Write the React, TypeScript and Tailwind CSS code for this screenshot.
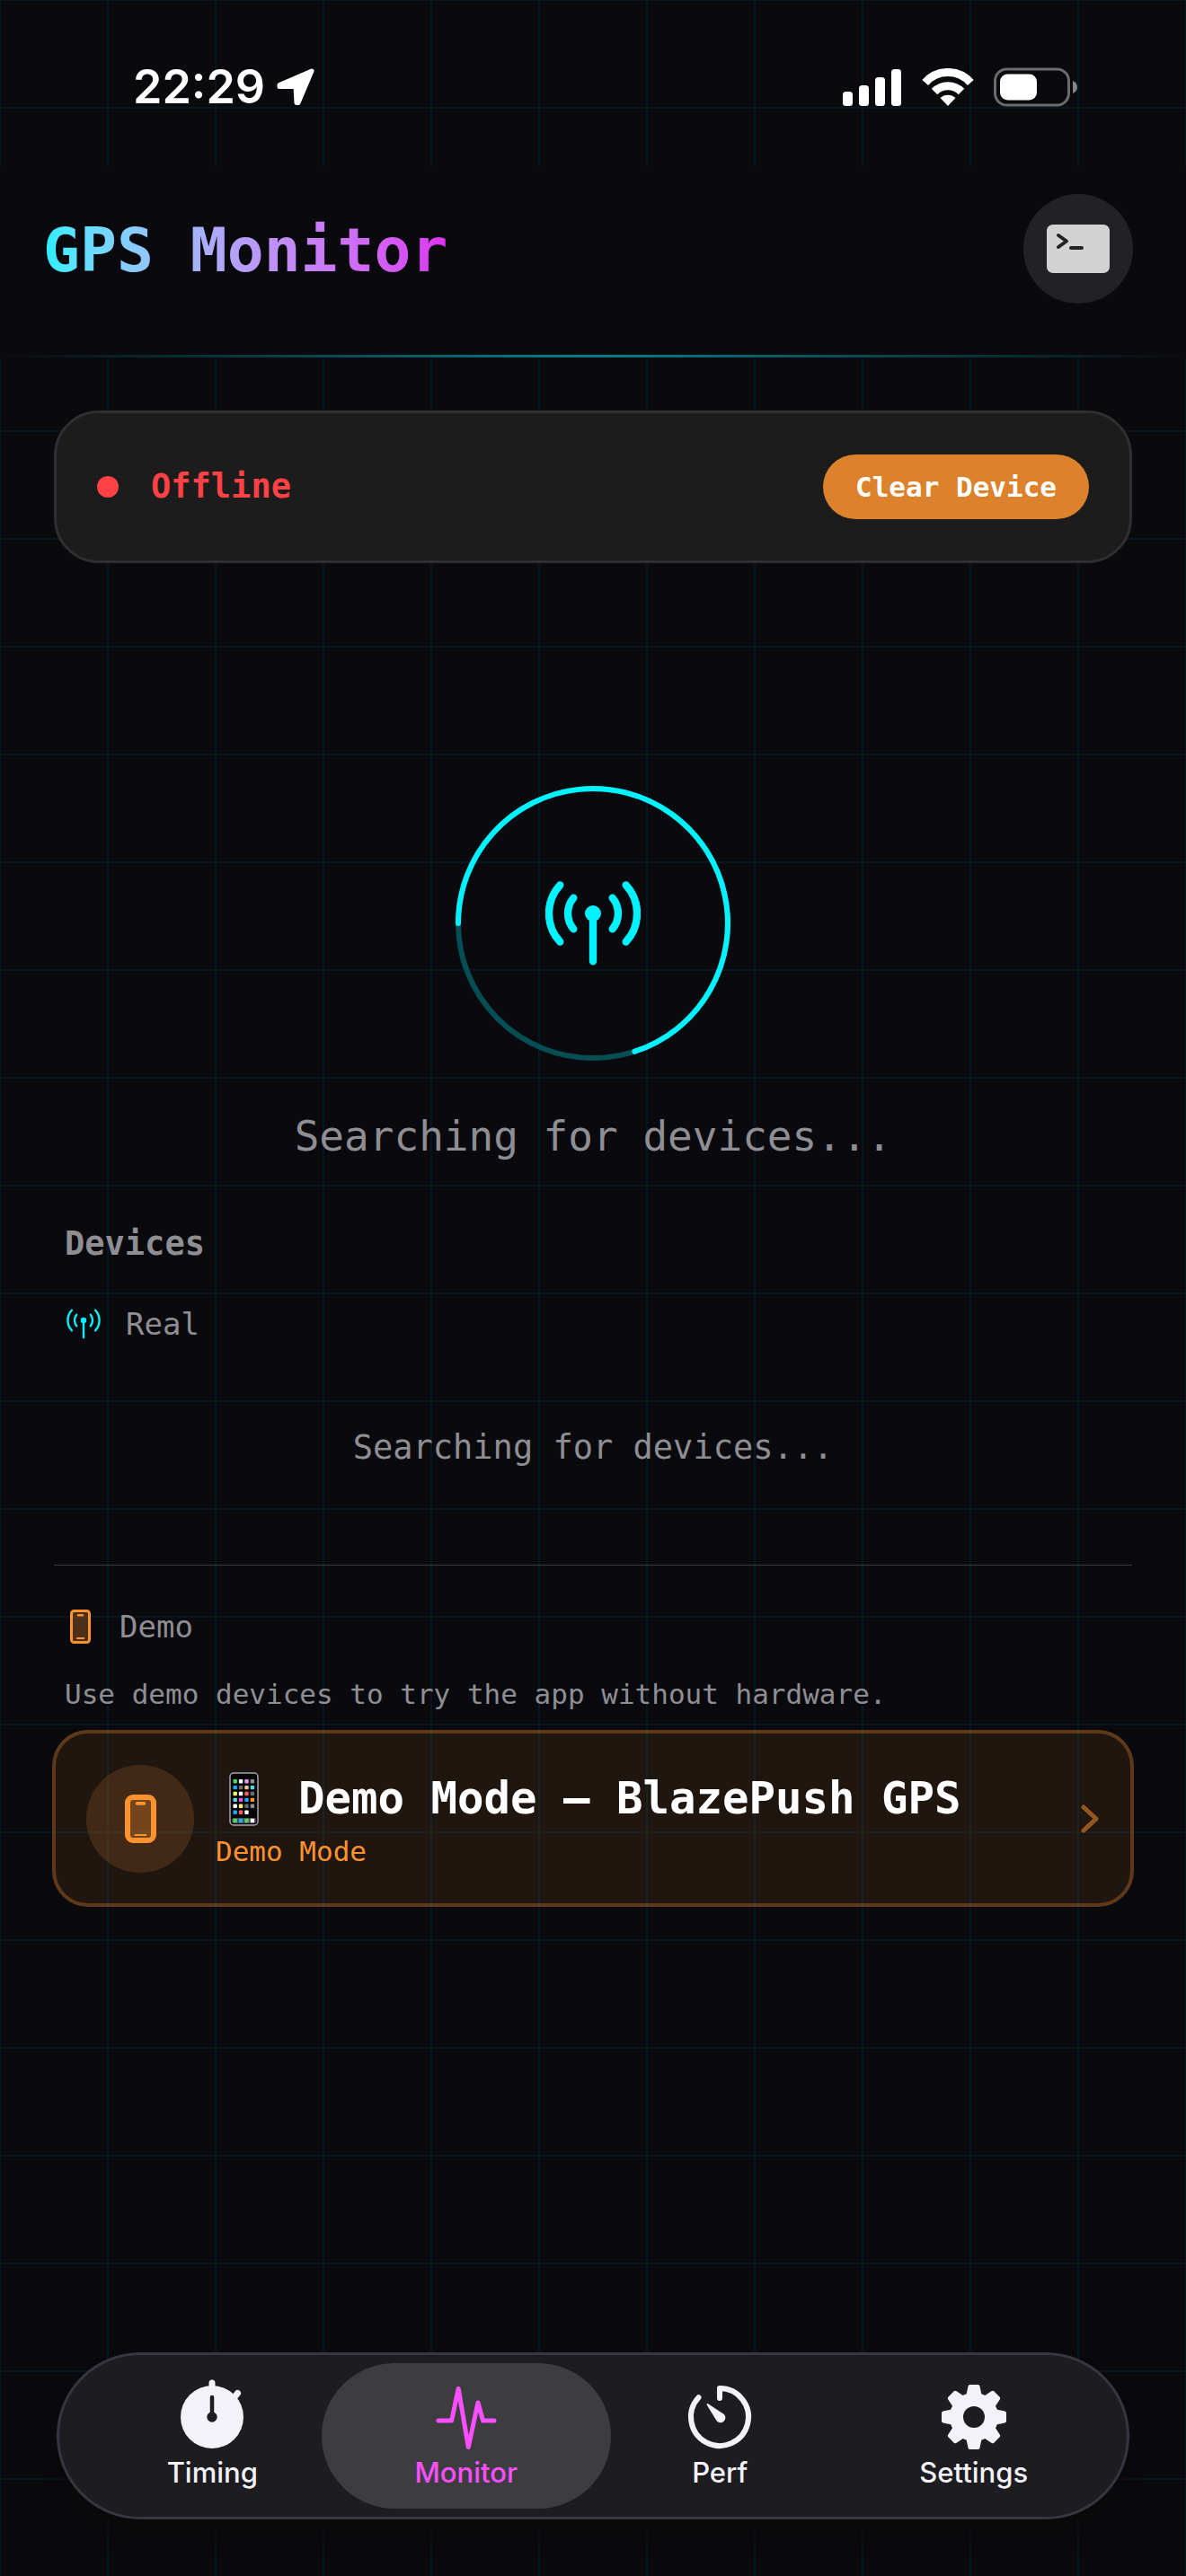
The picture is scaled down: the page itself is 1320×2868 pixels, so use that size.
import React from 'react';
import clsx from 'clsx';

interface IconProps {
  className?: string;
}

interface AntennaProps extends IconProps {
  stroke: number;
}

interface PhoneProps extends IconProps {
  width: number;
  height: number;
  stroke: number;
}

interface TabItem {
  id: string;
  name: string;
  icon: React.ReactNode;
}

const APP_COLORS = ['#4cd964', '#ffffff', '#e59bf5', '#8e8e93', '#1badf8', '#6b6b70', '#e8c39e', '#4fd8e8', '#fff06a', '#ffffff', '#ff5b57', '#6b6b70', '#5be0e0', '#ef4fef', '#1badf8', '#ff9500', '#ffffff', '#fff06a', '#6b6b70', '#8e8e93', '#1badf8', '#ff5b57', '#ffffff'];
const DOCK_COLORS = ['#4cd964', '#1badf8', '#4cd964', '#ffffff'];
const GEAR_TEETH = [0, 45, 90, 135, 180, 225, 270, 315];

const AntennaIcon = ({ className, stroke }: AntennaProps) => (
  <svg viewBox="441 396 318 280" className={className} fill="none" stroke="#00f3ff" strokeWidth={stroke} strokeLinecap="round" aria-hidden="true">
    <path d="M490 408A140 140 0 0 0 490 598M535 451A81 81 0 0 0 535 555M710 408A140 140 0 0 1 710 598M665 451A81 81 0 0 1 665 555M600 503V663" />
    <circle cx="600" cy="503" r="27" fill="#00f3ff" stroke="none" />
  </svg>
);

const PhoneIcon = ({ className, width, height, stroke }: PhoneProps) => (
  <svg width={width} height={height} viewBox={`0 0 ${width} ${height}`} className={className} fill="none" aria-hidden="true">
    <rect x={stroke / 2} y={stroke / 2} width={width - stroke} height={height - stroke} rx={stroke} fill="#ff9230" fillOpacity="0.27" stroke="#ff9230" strokeWidth={stroke} />
    <rect x={width / 2 - width * 0.16} y={stroke + 2} width={width * 0.32} height={width * 0.11} rx="1.5" fill="#ff9230" />
    <rect x={width / 2 - width * 0.2} y={height - stroke - 4} width={width * 0.4} height="2" rx="1" fill="#ff9230" />
  </svg>
);

const PhoneEmoji = () => (
  <svg width="60" height="60" viewBox="0 0 60 60" className="shrink-0" role="img" aria-label="Phone">
    <rect x="16" y="1" width="31" height="58" rx="4" fill="#050507" stroke="#a8a3aa" strokeWidth="1.5" />
    <rect x="18" y="51" width="27" height="6" rx="1.5" fill="#4a4a4f" />
    {APP_COLORS.map((color, i) => (
      <rect key={i} x={19.5 + (i % 4) * 6.4} y={8 + Math.floor(i / 4) * 6.9} width="4.4" height="4.4" rx="1" fill={color} />
    ))}
    {DOCK_COLORS.map((color, i) => (
      <rect key={i} x={19.5 + i * 6.4} y="51.8" width="4.4" height="4.4" rx="1" fill={color} />
    ))}
  </svg>
);

const TimingIcon = () => (
  <svg width="84" height="84" viewBox="0 0 84 84" strokeLinecap="round" aria-hidden="true">
    <circle cx="42" cy="42" r="35" fill="#f2f2f8" />
    <path d="M42 4V12M70.500 15.500L66 21" stroke="#f2f2f8" strokeWidth="7" />
    <path d="M42 42V20" stroke="#1d1d21" strokeWidth="4.500" />
    <circle cx="42" cy="42" r="5.700" fill="#1d1d21" />
  </svg>
);

const MonitorIcon = () => (
  <svg width="84" height="84" viewBox="0 0 84 84" fill="none" stroke="#fa4fff" strokeWidth="5" strokeLinecap="round" strokeLinejoin="round" aria-hidden="true">
    <path d="M11 46H25.600L33.200 10.500L44.300 75.500L55 26L60.500 46H73" />
  </svg>
);

const PerfIcon = () => (
  <svg width="84" height="84" viewBox="0 0 84 84" fill="none" stroke="#f2f2f8" strokeLinecap="round" strokeLinejoin="round" aria-hidden="true">
    <path d="M42 21V10A32 32 0 1 1 18.500 20.300" strokeWidth="6" />
    <path d="M28.500 28L39 45A4.500 4.500 0 1 0 46 39.500Z" fill="#f2f2f8" strokeWidth="2" />
  </svg>
);

const SettingsIcon = () => (
  <svg width="84" height="84" viewBox="0 0 84 84" fill="#f2f2f8" stroke="#f2f2f8" strokeLinejoin="round" aria-hidden="true">
    <circle cx="42" cy="42" r="19.500" fill="none" strokeWidth="15" />
    {GEAR_TEETH.map((angle) => (
      <path key={angle} d="M37.500 8H46.500L49 20H35Z" strokeWidth="4" transform={`rotate(${angle} 42 42)`} />
    ))}
  </svg>
);

const TABS: TabItem[] = [
  { id: 'timing', name: 'Timing', icon: <TimingIcon /> },
  { id: 'monitor', name: 'Monitor', icon: <MonitorIcon /> },
  { id: 'perf', name: 'Perf', icon: <PerfIcon /> },
  { id: 'settings', name: 'Settings', icon: <SettingsIcon /> },
];

const StatusBar = () => (
  <div className="flex h-[186px] items-start justify-between pt-[67px] pr-[120px] pl-[148px] text-white">
    <div className="flex h-[60px] items-center gap-3">
      <span className="font-['Inter',sans-serif] text-[52px] leading-[60px] font-semibold">22:29</span>
      <svg width="44" height="44" viewBox="0 0 44 44" fill="currentColor" stroke="currentColor" strokeWidth="5" strokeLinejoin="round" aria-hidden="true">
        <path d="M40 4L4 19.500V21.500H22L23 39.500H25Z" />
      </svg>
    </div>
    <div className="flex h-[60px] items-center">
      <svg width="66" height="42" viewBox="0 0 66 42" fill="currentColor" aria-hidden="true">
        <rect x="0" y="26" width="11" height="16" rx="3.500" />
        <rect x="18" y="19" width="11" height="23" rx="3.500" />
        <rect x="36" y="10" width="11" height="32" rx="3.500" />
        <rect x="54" y="1" width="11" height="41" rx="3.500" />
      </svg>
      <svg width="58" height="42" viewBox="0 0 58 42" className="ml-[22px]" fill="none" stroke="currentColor" strokeWidth="9" aria-hidden="true">
        <path d="M3.700 16A33.500 33.500 0 0 1 54.300 16M14 26A21 21 0 0 1 44 26" />
        <path d="M29 42L20.500 33A12.500 12.500 0 0 1 37.500 33Z" fill="currentColor" stroke="none" />
      </svg>
      <svg width="94" height="44" viewBox="0 0 94 44" className="ml-[22px]" aria-hidden="true">
        <rect x="1.500" y="2" width="82" height="40" rx="13" fill="none" stroke="#6c6c6e" strokeWidth="3" />
        <rect x="7" y="7.500" width="41" height="29" rx="8.500" fill="#fff" />
        <path d="M88 15Q93 17 93 22T88 29Z" fill="#85858a" />
      </svg>
    </div>
  </div>
);

const Header = () => (
  <header className="bg-[#0a0a0e]">
    <div className="flex h-[209px] items-center justify-between pr-[59px] pb-[27px] pl-12">
      <h1 className="bg-linear-to-r from-[#1eefff] via-[#b79cf8] to-[#db30f0] bg-clip-text pt-1 text-[68px] leading-[80px] font-bold text-transparent">GPS Monitor</h1>
      <button type="button" aria-label="Open console" className="flex size-[122px] items-center justify-center rounded-full bg-[#222226]">
        <svg width="70" height="54" viewBox="0 0 70 54" fill="none" aria-hidden="true">
          <rect width="70" height="54" rx="7" fill="#d3d3d3" />
          <path d="M13 12L22 18.500L13 25M27 26H39" stroke="#222226" strokeWidth="4" strokeLinecap="round" strokeLinejoin="round" />
        </svg>
      </button>
    </div>
    <div className="h-[3px] bg-linear-to-r from-transparent via-[#058088] to-transparent" />
  </header>
);

const ConnectionCard = () => (
  <section className="flex h-[170px] items-center justify-between rounded-[50px] border-[3px] border-[#2f2f31] bg-[#1c1c1c] px-[45px]">
    <div className="flex items-center gap-9">
      <span className="size-6 rounded-full bg-[#ff4245]" />
      <span className="text-[37px] leading-[48px] font-bold text-[#ff4245]">Offline</span>
    </div>
    <button type="button" className="h-[72px] rounded-full bg-[#dc812c] px-9 text-[31px] leading-[40px] font-bold text-white">Clear Device</button>
  </section>
);

const SearchRing = () => (
  <div className="relative mx-auto mt-[248px] flex size-[306px] items-center justify-center">
    <svg viewBox="0 0 306 306" className="absolute inset-0 size-full" fill="none" strokeWidth="6" aria-hidden="true">
      <circle cx="153" cy="153" r="150" stroke="#064e54" />
      <path d="M3 153A150 150 0 1 1 199.400 295.700" stroke="#00f3ff" strokeLinecap="round" />
    </svg>
    <AntennaIcon stroke={25} className="h-[94px] w-[106px]" />
  </div>
);

const DemoCard = () => (
  <button type="button" className="-mx-[2px] mt-5 flex h-[197px] items-center rounded-[40px] border-4 border-[#ff9230]/28 bg-[#ff9230]/9 pr-[34px] pl-[34px] text-left">
    <span className="flex size-[120px] shrink-0 items-center justify-center rounded-full bg-[#ff9230]/15">
      <PhoneIcon width={35} height={54} stroke={6} />
    </span>
    <span className="ml-6 flex flex-1 flex-col gap-2 pt-1">
      <span className="flex h-[60px] items-center gap-8">
        <PhoneEmoji />
        <span className="text-[49px] leading-[60px] font-bold text-white">Demo Mode – BlazePush GPS</span>
      </span>
      <span className="text-[31px] leading-[40px] text-[#ff9230]">Demo Mode</span>
    </span>
    <svg width="22" height="34" viewBox="0 0 22 34" fill="none" stroke="#95571f" strokeWidth="5" strokeLinecap="round" strokeLinejoin="round" aria-hidden="true">
      <path d="M4 4L18 17L4 30" />
    </svg>
  </button>
);

const TabBar = () => {
  const [activeTab, setActiveTab] = React.useState('monitor');

  return (
    <nav className="mx-[63px] mt-auto mb-[63px] flex h-[186px] rounded-full border-[3px] border-[#363640] bg-[#1d1d21] px-[29px] py-[9px] font-['Inter',sans-serif] shadow-[0_24px_30px_rgba(10,10,10,0.8)]">
      {TABS.map((tab) => (
        <button
          key={tab.id}
          type="button"
          onClick={() => setActiveTab(tab.id)}
          className={clsx(
            '-mx-5 flex flex-1 flex-col items-center rounded-full pt-[18px] text-[31px] leading-[40px] font-medium',
            activeTab === tab.id ? 'bg-[#3d3d40] text-[#fa4fff]' : 'text-[#f2f2f8]',
          )}
        >
          {tab.icon}
          {tab.name}
        </button>
      ))}
    </nav>
  );
};

const App = () => {
  return (
    <div className="flex min-h-screen flex-col bg-[#0a0a0e] bg-[linear-gradient(#071620_2px,transparent_2px),linear-gradient(90deg,#071620_2px,transparent_2px)] bg-size-[120px_120px] bg-position-[-1px_-1px] font-['DejaVu_Sans_Mono',monospace] text-[#8e8e93]">
      <StatusBar />
      <Header />
      <main className="flex flex-col px-[60px] pt-[59px]">
        <ConnectionCard />
        <SearchRing />
        <p className="mt-[54px] text-center text-[46px] leading-[60px]">Searching for devices...</p>

        <h2 className="mt-[66px] px-3 text-[37px] leading-[48px] font-bold">Devices</h2>
        <div className="mt-[43px] flex items-center gap-7 px-[14px]">
          <AntennaIcon stroke={20} className="h-[34px] w-[38px]" />
          <h3 className="text-[34px] leading-[44px]">Real</h3>
        </div>
        <p className="mt-[92px] text-center text-[37px] leading-[48px]">Searching for devices...</p>

        <hr className="mt-[106px] border-[#3a3b3e]" />
        <div className="mt-[46px] flex items-center gap-8 px-[18px]">
          <PhoneIcon width={23} height={38} stroke={3} />
          <h3 className="text-[34px] leading-[44px]">Demo</h3>
        </div>
        <p className="mt-[33px] px-3 text-[31px] leading-[40px]">Use demo devices to try the app without hardware.</p>
        <DemoCard />
      </main>
      <TabBar />
    </div>
  );
};

export default App;
